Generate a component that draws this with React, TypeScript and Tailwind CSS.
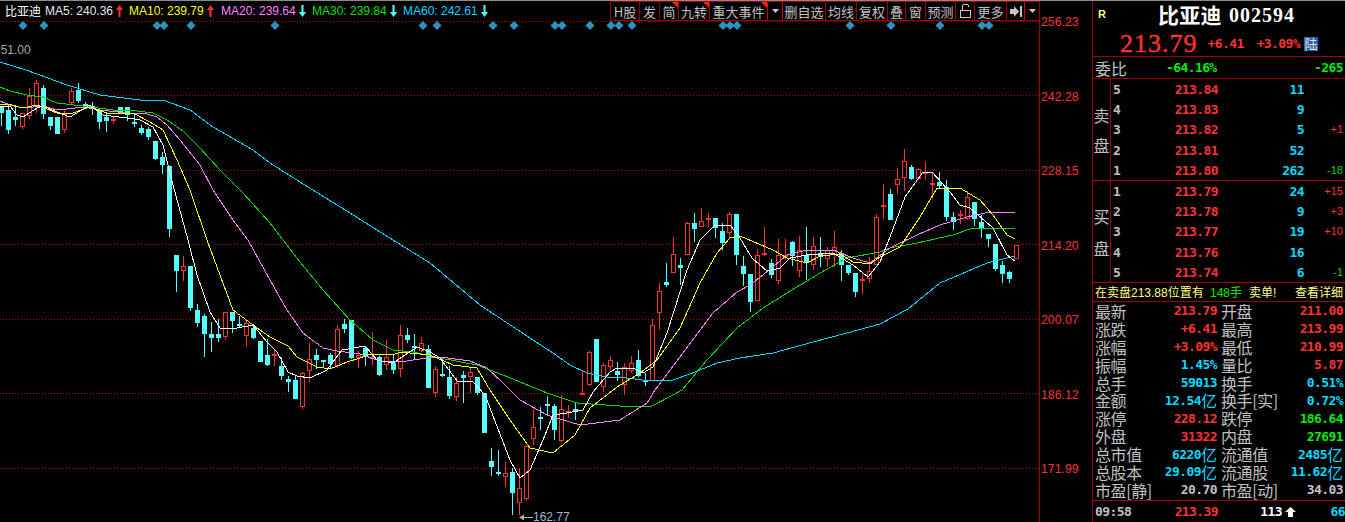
import React from "react";

const MONO = "font-['DejaVu_Sans_Mono','Liberation_Mono',monospace]";
const CJK = "font-['Noto_Sans_CJK_SC',sans-serif]";

// [high, bodyTop, bodyBottom, low, red?]
const candles: number[][] = [
  [106,106,113,126,0],[105,110,130,134,0],[107,117,120,126,0],[113,113,127,129,1],[88,96,116,119,1],[80,83,107,113,1],[85,88,114,119,0],[117,117,126,130,0],[117,117,134,134,0],[111,114,130,133,1],
  [88,91,103,105,1],[83,90,101,103,0],[102,104,107,108,0],[102,106,109,115,0],[111,111,122,129,0],[113,117,121,132,0],[117,119,119,124,1],[107,107,114,114,0],[107,107,115,121,0],[113,122,122,127,0],
  [125,128,133,135,0],[127,129,137,140,0],[141,141,159,160,0],[152,157,165,174,0],[166,166,229,237,0],[255,255,271,292,0],[256,266,271,281,1],[266,266,308,311,0],[304,310,323,327,0],[314,316,334,357,0],
  [322,334,338,352,0],[319,334,338,342,0],[312,312,337,340,1],[312,312,321,333,0],[316,324,326,327,0],[320,323,336,347,1],[324,328,338,339,0],[341,341,362,362,0],[339,355,365,366,0],[349,354,354,366,1],
  [357,366,376,380,0],[376,379,382,392,0],[375,380,399,399,0],[372,373,407,409,1],[343,359,371,382,1],[349,355,360,369,0],[360,360,361,368,0],[353,355,364,368,0],[325,329,366,368,1],[319,324,329,333,0],
  [320,320,358,359,0],[351,355,358,368,1],[346,348,355,366,0],[332,357,357,365,1],[356,357,375,376,0],[340,357,365,370,1],[355,363,370,374,0],[325,335,369,377,1],[328,335,340,343,0],[334,346,347,359,0],
  [337,343,351,352,1],[345,349,388,388,0],[366,369,393,397,1],[357,374,374,377,0],[366,377,396,399,0],[377,383,397,401,1],[371,375,378,403,0],[367,372,377,393,1],[377,377,393,395,0],[393,393,433,433,0],
  [448,461,467,476,0],[450,472,474,476,0],[462,473,477,487,1],[468,472,493,515,0],[468,488,503,515,1],[445,446,499,501,1],[409,427,439,445,1],[407,417,417,430,0],[396,404,405,415,0],[404,406,430,440,0],
  [395,409,441,442,1],[405,411,411,418,1],[402,409,409,420,0],[371,393,393,395,1],[351,352,385,386,1],[339,339,382,382,0],[363,365,387,392,1],[356,360,367,370,1],[362,371,375,381,0],[363,367,385,395,1],
  [356,363,371,373,1],[350,360,376,377,0],[373,380,381,386,0],[319,325,381,381,1],[283,291,313,330,1],[263,282,285,287,0],[237,254,273,273,1],[258,265,268,285,0],[222,223,255,255,1],[213,223,229,242,0],
  [208,221,227,227,1],[213,218,218,227,1],[218,218,228,238,0],[223,231,243,250,0],[212,214,233,238,1],[214,214,255,265,0],[256,266,274,286,0],[274,274,302,312,0],[249,255,301,301,1],[227,253,255,256,1],
  [259,263,275,278,0],[239,255,281,284,1],[239,255,256,260,1],[241,242,256,266,0],[236,250,271,277,1],[227,255,262,280,0],[237,246,265,270,1],[237,253,257,267,0],[247,250,259,267,1],[231,247,255,267,1],
  [250,253,265,281,0],[265,265,273,275,0],[273,273,292,297,0],[272,279,281,294,1],[257,271,279,283,1],[214,217,265,265,1],[184,205,207,219,1],[189,194,220,220,0],[168,179,185,194,1],[149,161,178,191,1],
  [165,167,179,180,0],[168,169,179,180,1],[162,172,174,180,1],[173,183,184,199,1],[172,182,186,189,0],[180,187,217,221,0],[212,217,222,230,0],[210,214,214,224,1],[191,197,219,220,1],[202,202,219,226,0],
  [215,222,228,238,0],[234,234,239,247,0],[244,244,269,271,0],[261,265,274,283,0],[271,272,279,283,0],[245,245,259,259,1],
];

const ma60 = "0,62 26,70 67,85 100,95 140,100 163,100 190,110 213,127 253,150 270,163 300,182 350,213 393,240 430,263 480,305 533,340 553,353 570,365 587,373 607,377 627,378 650,381 673,380 690,374 717,363 740,358 773,353 813,342 847,333 880,324 908,309 940,283 987,263 1015,256";
const ma30 = "0,87 10,91 27,95 43,97 57,103 83,106 113,110 137,111 153,113 167,120 183,131 200,148 220,170 243,193 270,223 283,240 300,262 323,290 350,320 373,340 393,350 413,352 440,358 477,365 503,375 547,393 577,403 620,406 650,407 673,395 682,390 707,360 737,328 763,308 787,293 820,273 847,258 880,252 890,248 917,243 953,235 973,228 1015,228";
const ma20 = "0,101 10,105 23,108 43,106 57,110 67,109 83,107 100,110 127,113 147,114 157,117 167,125 180,140 200,165 213,190 233,220 248,240 270,280 287,310 303,333 323,348 337,351 360,354 380,361 400,362 427,358 440,357 470,361 487,368 503,383 520,400 547,415 580,425 620,420 647,403 655,390 683,353 713,313 737,292 750,285 773,267 787,255 807,250 833,250 853,258 870,263 890,248 917,235 940,225 967,217 990,212 1007,212 1015,213";
const ma10 = "0,104 8,104 23,108 37,105 57,113 70,114 90,107 110,114 133,113 150,122 163,130 177,160 190,190 207,240 220,275 233,310 253,325 270,337 288,346 297,357 317,367 330,369 347,362 360,358 370,354 393,355 400,352 430,355 453,365 477,368 490,390 510,420 530,448 553,453 575,435 590,408 617,387 640,373 657,360 680,328 700,283 717,253 730,238 740,236 773,250 787,258 807,263 820,256 840,254 853,262 870,264 880,257 900,247 920,217 937,188 960,188 980,200 993,215 1007,235 1015,239";
const ma5 = "0,106 10,106 17,115 23,117 37,108 43,106 57,112 70,117 90,105 103,115 127,118 140,120 153,127 163,145 173,185 188,240 197,275 210,312 220,328 237,328 253,325 267,342 277,352 288,372 297,376 310,378 327,370 342,350 365,346 377,360 393,363 417,347 430,352 440,358 457,381 473,382 485,395 510,460 520,478 530,470 543,440 553,415 567,413 583,410 593,392 610,372 617,368 633,368 643,373 653,367 667,333 687,270 700,240 715,225 730,225 740,238 752,258 767,271 780,268 790,258 807,255 833,253 853,265 868,277 880,262 890,237 905,197 923,172 932,172 950,192 960,205 970,208 993,228 1007,255 1015,261";

const diamonds = [23,44,157,164,191,275,423,437,493,514,555,562,590,611,619,632,723,730,737,850,891,940,982,989];
const gridY = [21,95,170,244,319,393,468];
const axis = ["256.23","242.28","228.15","214.20","200.07","186.12","171.99"];

const legend = [
  { t: "MA5: 240.36", c: "text-[#e8e8e8]", up: true, w: "w-[84px]" },
  { t: "MA10: 239.79", c: "text-[#ffff00]", up: true, w: "w-[92px]" },
  { t: "MA20: 239.64", c: "text-[#ff80ff]", up: false, w: "w-[91px]" },
  { t: "MA30: 239.84", c: "text-[#00e000]", up: false, w: "w-[91px]" },
  { t: "MA60: 242.61", c: "text-[#00d8ff]", up: false, w: "w-[91px]" },
];

function MiniArrow({ up }: { up: boolean }) {
  return (
    <svg width="7" height="12" viewBox="0 0 7 12" className="ml-[3px]">
      {up ? (
        <path d="M3.5 0 L7 5 L4.5 5 L4.5 12 L2.5 12 L2.5 5 L0 5 Z" fill="#ff3232" />
      ) : (
        <path d="M3.5 12 L7 7 L4.5 7 L4.5 0 L2.5 0 L2.5 7 L0 7 Z" fill="#54ffff" />
      )}
    </svg>
  );
}

const Corner = () => (
  <svg width="6" height="6" viewBox="0 0 6 6" className="absolute right-0 top-0">
    <path d="M0 0 H6 V6 Z" fill="#ff2020" />
  </svg>
);

const Caret = () => (
  <svg width="7" height="4" viewBox="0 0 7 4"><path d="M0 0 H7 L3.5 4 Z" fill="#c8c8c8" /></svg>
);

const tools: { t?: string; w: string; corner?: boolean; icon?: React.ReactNode; strong?: boolean }[] = [
  { t: "H股", w: "w-[29px]" },
  { t: "发", w: "w-[20px]" },
  { t: "简", w: "w-[19px]", corner: true },
  { t: "九转", w: "w-[31px]", corner: true },
  { t: "重大事件", w: "w-[58px]", corner: true },
  { w: "w-[15px]", icon: <Caret />, strong: true },
  { t: "删自选", w: "w-[43px]", strong: true },
  { t: "均线", w: "w-[31px]" },
  { t: "复权", w: "w-[31px]" },
  { t: "叠", w: "w-[18px]" },
  { t: "窗", w: "w-[20px]" },
  { t: "预测", w: "w-[30px]" },
  {
    w: "w-[19px]",
    icon: (
      <svg width="11" height="14" viewBox="0 0 11 14" fill="none" stroke="#c8c8c8" strokeWidth="1" shapeRendering="crispEdges">
        <rect x="0.5" y="6.5" width="10" height="7" />
        <path d="M2.5 6.5 V2 Q2.5 0.5 5.5 0.5 Q8.5 0.5 8.5 2 V3" />
      </svg>
    ),
  },
  { t: "更多", w: "w-[32px]" },
  {
    w: "w-[18px]",
    icon: (
      <svg width="12" height="11" viewBox="0 0 12 11"><path d="M0 3 H4 V0 L9 5.5 L4 11 V8 H0 Z M10 0 H12 V11 H10 Z" fill="#c8c8c8" /></svg>
    ),
  },
  { w: "w-[15px]", icon: <Caret />, strong: true },
];

const asks = [
  ["5","213.84","11","",""],
  ["4","213.83","9","",""],
  ["3","213.82","5","+1","r"],
  ["2","213.81","52","",""],
  ["1","213.80","262","-18","g"],
];
const bids = [
  ["1","213.79","24","+15","r"],
  ["2","213.78","9","+3","r"],
  ["3","213.77","19","+10","r"],
  ["4","213.76","16","",""],
  ["5","213.74","6","-1","g"],
];

const R = "text-[#ff3232]", G = "text-[#00ee00]", C = "text-[#00dcff]", W = "text-[#c0c0c0]";

const stats: [string, string, string, string, string, string, string?, string?][] = [
  ["最新","213.79",R,"开盘","211.00",R],
  ["涨跌","+6.41",R,"最高","213.99",R],
  ["涨幅","+3.09%",R,"最低","210.99",R],
  ["振幅","1.45%",C,"量比","5.87",R],
  ["总手","59013",C,"换手","0.51%",C],
  ["金额","12.54",C,"换手[实]","0.72%",C,"亿"],
  ["涨停","228.12",R,"跌停","186.64",G],
  ["外盘","31322",R,"内盘","27691",G],
  ["总市值","6220",C,"流通值","2485",C,"亿","亿"],
  ["总股本","29.09",C,"流通股","11.62",C,"亿","亿"],
  ["市盈[静]","20.70",W,"市盈[动]","34.03",W],
];

function BookRow({ r }: { r: string[] }) {
  return (
    <div className="flex h-[20.4px] items-center">
      <span className={`w-[20px] pl-[2px] text-[13px] font-bold leading-none text-[#c0c0c0] ${MONO}`}>{r[0]}</span>
      <span className={`w-[87px] text-right text-[13px] font-bold leading-none tracking-[-0.6px] text-[#ff3232] ${MONO}`}>{r[1]}</span>
      <span className={`w-[86px] text-right text-[13px] font-bold leading-none tracking-[-0.6px] text-[#00dcff] ${MONO}`}>{r[2]}</span>
      <span className={`flex-1 pr-[2px] text-right text-[11px] leading-none font-['Liberation_Sans',sans-serif] ${r[4] === "r" ? "text-[#ff3232]" : "text-[#00d800]"}`}>{r[3]}</span>
    </div>
  );
}

function Book({ rows, a, b, gap }: { rows: string[][]; a: string; b: string; gap: string }) {
  return (
    <div className="flex h-[102px] border-b border-[#a00000]">
      <div className={`flex w-[18px] flex-col items-center justify-center ${gap} border-r border-[#a00000] text-[16px] leading-none text-[#c0c0c0] ${CJK}`}>
        <span>{a}</span>
        <span>{b}</span>
      </div>
      <div className="flex-1">
        {rows.map((r) => (
          <BookRow key={r[0]} r={r} />
        ))}
      </div>
    </div>
  );
}

export default function App() {
  return (
    <div className="relative flex h-[522px] w-[1345px] overflow-hidden bg-black font-['Liberation_Sans',sans-serif]">
      <div className="absolute inset-x-0 top-0 z-10 h-px bg-[#8c8c8c]" />
      {/* chart column */}
      <div className="relative flex w-[1039px] flex-col">
        <div className="flex h-[21px] shrink-0 items-center justify-between">
          <div className="flex items-center pl-[5px]">
            <span className={`w-[40px] text-[12px] leading-none text-white ${CJK}`}>比亚迪</span>
            {legend.map((l) => (
              <div key={l.t} className={`flex items-center whitespace-nowrap text-[12px] leading-none ${l.w} ${l.c}`}>
                <span>{l.t}</span>
                <MiniArrow up={l.up} />
              </div>
            ))}
          </div>
          <div className="flex h-[20px] self-end border-y border-[#a00000]">
            {tools.map((t, i) => (
              <div
                key={i}
                className={`relative flex items-center justify-center whitespace-nowrap border-l text-[13px] leading-none text-[#c0c0c0] ${t.strong ? "border-[#d00000]" : "border-[#a00000]"} ${CJK} ${t.w}`}
              >
                {t.t}
                {t.icon}
                {t.corner && <Corner />}
              </div>
            ))}
          </div>
        </div>

        <div className="relative flex-1 overflow-hidden">
          <svg width="1039" height="501" viewBox="0 21 1039 501" className="block">
            {gridY.map((y) => (
              <line key={y} x1="0" x2="1039" y1={y + 0.5} y2={y + 0.5} stroke="#a00000" strokeDasharray="1 2" />
            ))}
            {diamonds.map((x) => (
              <polygon key={x} points={`${x - 4.5},25.5 ${x},21 ${x + 4.5},25.5 ${x},30`} fill="#2a93c4" />
            ))}
            <g shapeRendering="crispEdges">
              {candles.map((c, k) => {
                const x = 1 + 7 * k;
                const [hi, top, bot, lo, red] = c;
                const col = red ? "#ff3232" : "#54ffff";
                const doji = bot - top <= 1;
                return (
                  <g key={k}>
                    <rect x={x} y={hi} width="1" height={lo - hi} fill={col} />
                    {doji ? (
                      <rect x={x - 2} y={top} width="5" height={Math.max(bot - top, 1) + 1} fill={col} />
                    ) : red ? (
                      <rect x={x - 1.5} y={top + 0.5} width="4" height={bot - top - 1} fill="#000" stroke={col} />
                    ) : (
                      <rect x={x - 2} y={top} width="5" height={bot - top} fill={col} />
                    )}
                  </g>
                );
              })}
            </g>
            <g fill="none" strokeWidth="1" shapeRendering="crispEdges">
              <polyline points={ma60} stroke="#00d8ff" />
              <polyline points={ma30} stroke="#00d800" />
              <polyline points={ma20} stroke="#ff80ff" />
              <polyline points={ma10} stroke="#ffff00" />
              <polyline points={ma5} stroke="#ffffff" />
            </g>
          </svg>
          <span className="absolute -left-[6px] top-[23px] text-[12px] leading-none text-[#a8a8a8]">251.00</span>
          <div className="absolute left-[519px] top-[490px] flex items-center text-[12px] leading-none text-[#9fb8d8]">
            <svg width="14" height="7" viewBox="0 0 14 7">
              <path d="M0 3.5 L5 0.5 V3 H14 V4 H5 V6.5 Z" fill="#b0b0b0" />
            </svg>
            162.77
          </div>
        </div>
      </div>

      {/* price axis */}
      <div className="flex w-[54px] flex-col border-x border-[#a00000] pt-[15px] pl-[1px]">
        {axis.map((a) => (
          <div key={a} className="h-[74.5px] shrink-0 text-[12.3px] leading-[14px] text-[#ff3232]">
            {a}
          </div>
        ))}
      </div>

      {/* quote panel */}
      <div className="flex w-[252px] flex-col">
        <div className="flex h-[29px] shrink-0 items-center pl-[5px]">
          <span className="w-[60px] text-[11px] font-bold leading-none text-[#ffff80]">R</span>
          <span className={`text-[21px] font-bold leading-none tracking-[0.3px] text-white ${CJK}`}>比亚迪</span>
          <span className="ml-[7px] text-[20px] font-bold leading-none tracking-[1px] text-white font-['Liberation_Serif',serif]">002594</span>
        </div>
        <div className="flex h-[28px] shrink-0 items-center border-b border-[#a00000] pl-[27px] pt-[2px]">
          <span className="text-[26px] leading-none tracking-[1px] text-[#ff3232] [-webkit-text-stroke:0.4px_#ff3232] font-['Liberation_Serif',serif]">213.79</span>
          <span className={`ml-[10px] text-[13px] font-bold leading-none tracking-[-0.6px] text-[#ff3232] ${MONO}`}>+6.41</span>
          <span className={`ml-[13px] text-[13px] font-bold leading-none tracking-[-0.6px] text-[#ff3232] ${MONO}`}>+3.09%</span>
          <span className={`ml-[4px] flex h-[14px] w-[14px] items-center justify-center bg-[#2b5ea8] text-[13px] leading-none text-[#e0e0e0] ${CJK}`}>陆</span>
        </div>
        <div className="flex h-[22px] shrink-0 items-center border-b border-[#a00000] pr-[2px] pl-[2px]">
          <span className={`w-[32px] text-[16px] leading-none text-[#c0c0c0] ${CJK}`}>委比</span>
          <span className={`ml-[39px] text-[13px] font-bold leading-none tracking-[-0.6px] text-[#00ee00] ${MONO}`}>-64.16%</span>
          <span className={`ml-auto text-[13px] font-bold leading-none tracking-[-0.6px] text-[#00ee00] ${MONO}`}>-265</span>
        </div>
        <Book rows={asks} a="卖" b="盘" gap="gap-[14px]" />
        <Book rows={bids} a="买" b="盘" gap="gap-[16px]" />
        <div className={`flex h-[19px] shrink-0 items-center border-b border-[#a00000] pr-[2px] pl-[2px] text-[12px] leading-none text-[#ffff80] ${CJK}`}>
          <span className="w-[115px] whitespace-nowrap">在卖盘<span className="font-['Liberation_Sans',sans-serif]">213.88</span>位置有</span>
          <span className="w-[39px] whitespace-nowrap text-[#00ee00]"><span className="font-['Liberation_Sans',sans-serif]">148</span>手</span>
          <span className="whitespace-nowrap">卖单<span className="font-['Liberation_Sans',sans-serif]">!</span></span>
          <span className="ml-auto">查看详细</span>
        </div>
        <div className="flex h-[199px] shrink-0 flex-col border-b border-[#a00000]">
          {stats.map((s) => (
            <div key={s[0]} className="flex h-[17.9px] shrink-0 items-center">
              <span className={`w-[60px] whitespace-nowrap pl-[2px] text-[16px] leading-none tracking-[-0.4px] text-[#c0c0c0] ${CJK}`}>{s[0]}</span>
              <span className={`flex w-[64px] items-center justify-end whitespace-nowrap text-[13px] font-bold leading-none tracking-[-0.6px] ${MONO} ${s[2]}`}>
                {s[1]}
                {s[6] && <span className={`text-[16px] font-normal tracking-normal ${CJK}`}>{s[6]}</span>}
              </span>
              <span className={`ml-[4px] w-[60px] whitespace-nowrap text-[16px] leading-none tracking-[-0.4px] text-[#c0c0c0] ${CJK}`}>{s[3]}</span>
              <span className={`flex flex-1 items-center justify-end whitespace-nowrap pr-[2px] text-[13px] font-bold leading-none tracking-[-0.6px] ${MONO} ${s[5]}`}>
                {s[4]}
                {s[7] && <span className={`text-[16px] font-normal tracking-normal ${CJK}`}>{s[7]}</span>}
              </span>
            </div>
          ))}
        </div>
        <div className={`flex flex-1 items-center text-[13px] font-bold leading-none tracking-[-0.6px] ${MONO}`}>
          <span className="w-[60px] pl-[2px] text-[#c0c0c0]">09:58</span>
          <span className="w-[65px] text-right text-[#ff3232]">213.39</span>
          <span className="w-[64px] text-right text-white">113</span>
          <svg width="11" height="10" viewBox="0 0 11 10" className="ml-[3px]"><path d="M5.5 0 L11 5 H8 V10 H3 V5 H0 Z" fill="#fff" /></svg>
          <span className="ml-auto text-[#00dcff]">66</span>
        </div>
      </div>
    </div>
  );
}
